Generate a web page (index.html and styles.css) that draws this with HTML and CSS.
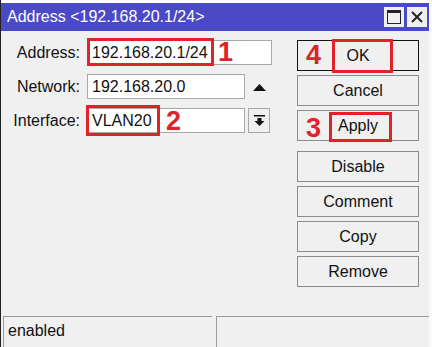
FILE: index.html
```html
<!doctype html>
<html lang="en">

<head>
    <title>Address &lt;192.168.20.1/24&gt;</title>
    <meta charset="utf-8">
    <link rel="stylesheet" href="styles.css">
</head>

<body>
    <div class="vindu">
        <div class="toppkant"></div>
        <div class="tittellinje">
            <span class="tittel">Address &lt;192.168.20.1/24&gt;</span>
            <div class="tittelknapper">
                <div class="tknapp">
                    <svg width="14" height="14" viewBox="0 0 14 14">
                        <rect x="0.5" y="0.5" width="13" height="13" fill="none" stroke="#222" stroke-width="1"/>
                        <rect x="0.5" y="0.5" width="13" height="2.5" fill="#222"/>
                    </svg>
                </div>
                <div class="tknapp">
                    <svg width="12" height="12" viewBox="0 0 12 12">
                        <path d="M1 1 L11 11 M11 1 L1 11" stroke="#222" stroke-width="2"/>
                    </svg>
                </div>
            </div>
        </div>

        <div class="innhold">
            <div class="skjema">
                <div class="rad">
                    <label class="etikett">Address:</label>
                    <div class="felt bred">192.168.20.1/24</div>
                    <div class="merke" id="merkeAdresse"></div>
                    <span class="tall" id="tall1">1</span>
                </div>
                <div class="rad">
                    <label class="etikett">Network:</label>
                    <div class="felt">192.168.20.0</div>
                    <svg class="pil" width="13" height="7" viewBox="0 0 13 7">
                        <path d="M0 7 L6.5 0 L13 7 Z" fill="#111"/>
                    </svg>
                </div>
                <div class="rad">
                    <label class="etikett">Interface:</label>
                    <div class="felt">VLAN20</div>
                    <div class="nedtrekk">
                        <svg width="11" height="11" viewBox="0 0 11 11">
                            <rect x="0" y="0" width="11" height="1.5" fill="#111"/>
                            <path d="M3.5 3 H7.5 V6 H10.5 L5.5 11 L0.5 6 H3.5 Z" fill="#111"/>
                        </svg>
                    </div>
                    <div class="merke" id="merkeGrensesnitt"></div>
                    <span class="tall" id="tall2">2</span>
                </div>
            </div>

            <div class="knapper">
                <div class="knappboks">
                    <button class="knapp standard">OK</button>
                    <div class="merke" id="merkeOk"></div>
                    <span class="tall" id="tall4">4</span>
                </div>
                <button class="knapp">Cancel</button>
                <div class="knappboks">
                    <button class="knapp">Apply</button>
                    <div class="merke" id="merkeApply"></div>
                    <span class="tall" id="tall3">3</span>
                </div>
                <button class="knapp skille">Disable</button>
                <button class="knapp">Comment</button>
                <button class="knapp">Copy</button>
                <button class="knapp">Remove</button>
            </div>
        </div>

        <div class="statuslinje">
            <div class="statusfelt forste">enabled</div>
            <div class="statusfelt andre"></div>
        </div>
    </div>
</body>

</html>
```

FILE: styles.css
```css
body {
    margin: 0;
    background: #f0f0f0;
    font-family: "Liberation Sans", Arial, sans-serif;
    font-size: 16px;
    color: #111;
    width: 432px;
    height: 347px;
    overflow: hidden;
}

.vindu {
    height: 347px;
    display: flex;
    flex-direction: column;
    border-left: 1px solid #222;
    border-right: 3px solid #fafafa;
    box-sizing: border-box;
}

.toppkant {
    height: 3px;
    background: #fff;
}

.tittellinje {
    height: 28px;
    background: #4a4ac6;
    color: white;
    display: flex;
    align-items: center;
    justify-content: space-between;
    padding-left: 6px;
    padding-right: 2px;
}

.tittel {
    margin-top: -1px;
}

.tittelknapper {
    display: flex;
    gap: 3px;
}

.tknapp {
    width: 20px;
    height: 20px;
    background: #efefef;
    display: flex;
    align-items: center;
    justify-content: center;
}

.innhold {
    display: flex;
    padding-top: 9px;
}

.skjema {
    width: 271px;
    display: flex;
    flex-direction: column;
    gap: 9px;
}

.rad {
    position: relative;
    display: flex;
    align-items: center;
    height: 25px;
}

.etikett {
    width: 79px;
    text-align: right;
    margin-right: 7px;
}

.felt {
    width: 158px;
    height: 25px;
    box-sizing: border-box;
    background: white;
    border: 1px solid #a8a8a8;
    padding-left: 4px;
    line-height: 23px;
}

.felt.bred {
    width: 185px;
}

.pil {
    margin-left: 8px;
    margin-top: 2px;
}

.nedtrekk {
    width: 22px;
    height: 25px;
    box-sizing: border-box;
    margin-left: 3px;
    border: 1px solid #a8a8a8;
    display: flex;
    align-items: center;
    justify-content: center;
}

.knapper {
    margin-left: 25px;
    width: 122px;
    display: flex;
    flex-direction: column;
    gap: 4px;
}

.knappboks {
    position: relative;
}

.knapp {
    width: 122px;
    height: 31px;
    background: #f0f0f0;
    border: 1px solid #8c8c8c;
    font-family: inherit;
    font-size: 16px;
    color: #111;
    padding: 0;
}

.knapp.standard {
    border-color: #111;
}

.knapp.skille {
    margin-top: 6px;
}

/* røde markeringer */
.merke {
    position: absolute;
    border: 3px solid #e0222a;
    box-sizing: border-box;
}

.tall {
    position: absolute;
    color: #e0222a;
    font-weight: bold;
    font-size: 27px;
    line-height: 30px;
}

#merkeAdresse {
    left: 86px;
    top: -2px;
    width: 127px;
    height: 28px;
}

#tall1 {
    left: 217px;
    top: -3px;
}

#merkeGrensesnitt {
    left: 85px;
    top: -3px;
    width: 74px;
    height: 31px;
}

#tall2 {
    left: 165px;
    top: -2px;
}

#merkeOk {
    left: 35px;
    top: -1px;
    width: 61px;
    height: 34px;
}

#tall4 {
    left: 9px;
    top: 0;
}

#merkeApply {
    left: 32px;
    top: 2px;
    width: 63px;
    height: 30px;
}

#tall3 {
    left: 9px;
    top: 3px;
}

.statuslinje {
    margin-top: auto;
    height: 31px;
    display: flex;
    gap: 4px;
    padding-left: 2px;
}

.statusfelt {
    border-top: 1px solid #9a9a9a;
    border-left: 1px solid #9a9a9a;
    padding-left: 4px;
    line-height: 28px;
}

.forste {
    width: 204px;
}

.andre {
    flex: 1;
}
```
